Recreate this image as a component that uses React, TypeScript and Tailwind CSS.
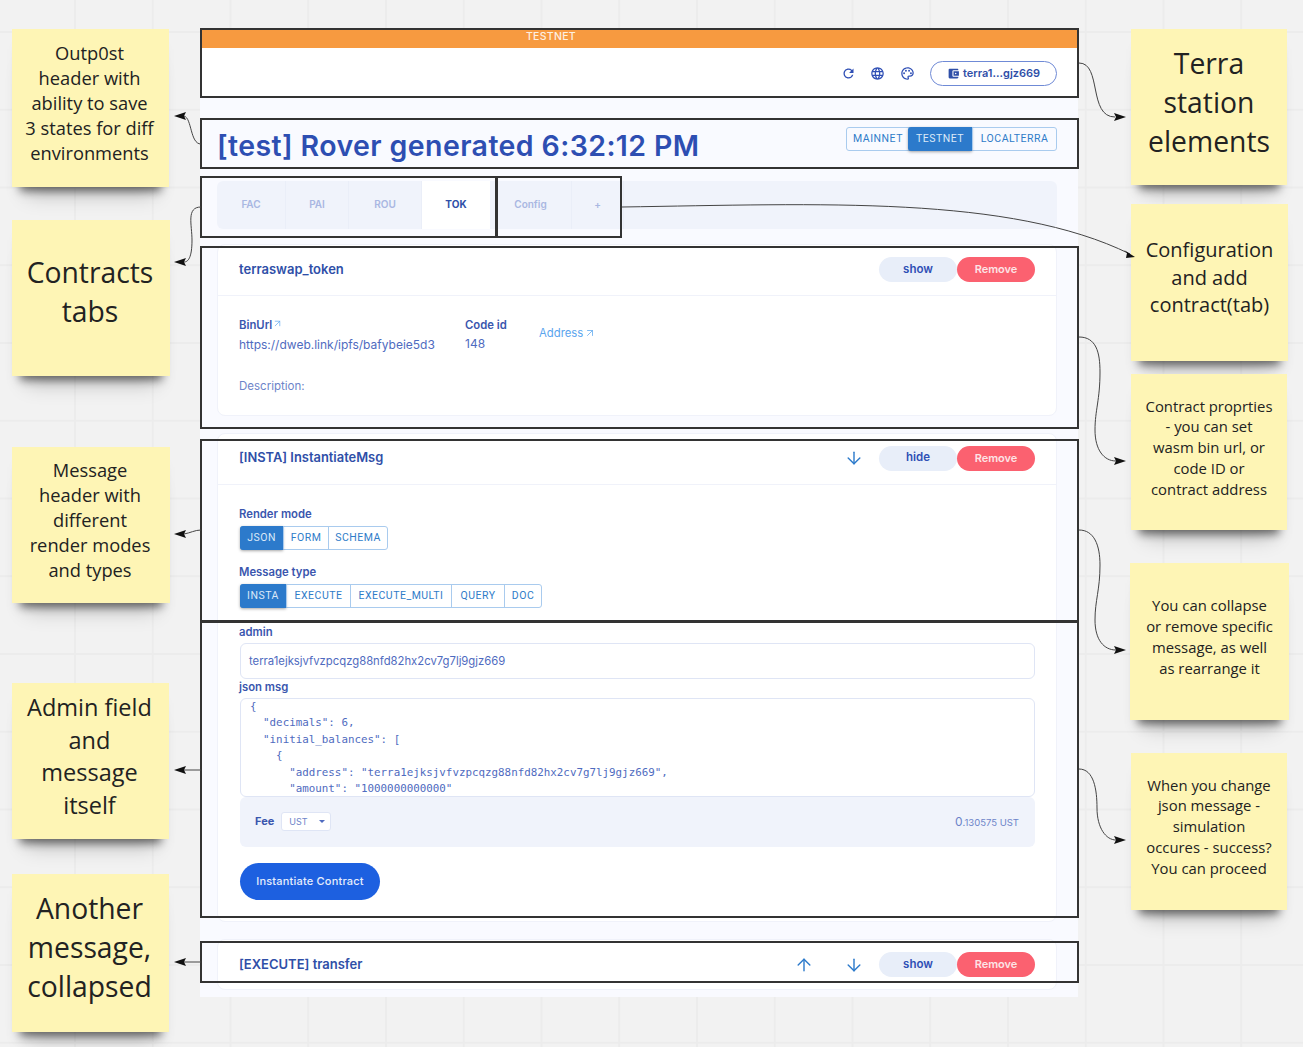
import { ArrowDown, ArrowUp, ArrowUpRight } from "lucide-react";
import {
  MdAccountBalanceWallet,
  MdLanguage,
  MdOutlinePalette,
  MdRefresh,
} from "react-icons/md";

interface StickyProps {
  left: number;
  top: number;
  width: number;
  height: number;
  className: string;
  lines: string[];
}

const stickies: StickyProps[] = [
  { left: 12, top: 29, width: 157, height: 158, className: "pb-[12px] pr-[2px] text-[18.3px] leading-[25px]", lines: ["Outp0st", "header with", "ability to save", "3 states for diff", "environments"] },
  { left: 12, top: 220, width: 158, height: 156, className: "pb-[12px] pr-[2px] text-[28.3px] leading-[39px]", lines: ["Contracts", "tabs"] },
  { left: 12, top: 447, width: 158, height: 156, className: "pb-[12px] pr-[2px] text-[18.3px] leading-[25px]", lines: ["Message", "header with", "different", "render modes", "and types"] },
  { left: 12, top: 683, width: 157, height: 156, className: "pb-[10px] pr-[2px] text-[23.5px] leading-[32.5px]", lines: ["Admin field", "and", "message", "itself"] },
  { left: 12, top: 874, width: 157, height: 158, className: "pb-[12px] pr-[2px] text-[28.3px] leading-[39px]", lines: ["Another", "message,", "collapsed"] },
  { left: 1131, top: 29, width: 156, height: 156, className: "pb-[10px] text-[28.3px] leading-[39px]", lines: ["Terra", "station", "elements"] },
  { left: 1131, top: 204, width: 157, height: 157, className: "pb-[10px] text-[20px] leading-[27.5px]", lines: ["Configuration", "and add", "contract(tab)"] },
  { left: 1131, top: 374, width: 156, height: 156, className: "pb-[9px] text-[14.85px] leading-[20.8px]", lines: ["Contract proprties", "- you can set", "wasm bin url, or", "code ID or", "contract address"] },
  { left: 1130, top: 563, width: 159, height: 157, className: "pb-[9px] text-[14.85px] leading-[20.8px]", lines: ["You can collapse", "or remove specific", "message, as well", "as rearrange it"] },
  { left: 1131, top: 753, width: 156, height: 157, className: "pb-[10px] text-[14.85px] leading-[20.8px]", lines: ["When you change", "json message -", "simulation", "occures - success?", "You can proceed"] },
];

// annotation boxes drawn over the app on the board
const frames = [
  { left: 200, top: 28, width: 879, height: 70 },
  { left: 200, top: 118, width: 879, height: 51 },
  { left: 200, top: 176, width: 297, height: 62 },
  { left: 496, top: 176, width: 126, height: 62 },
  { left: 200, top: 246, width: 879, height: 183 },
  { left: 200, top: 439, width: 879, height: 183 },
  { left: 200, top: 621, width: 879, height: 297 },
  { left: 200, top: 941, width: 879, height: 42 },
];

const curves = [
  "M201 144 C190 144 192 118 184 116",
  "M201 207 C186 207 192 225 192 240 C192 258 188 262 184 262",
  "M201 530 C195 530 190 533 184 534",
  "M201 770 L184 770",
  "M201 962 L184 962",
  "M1079 63 C1102 63 1088 117 1115 117",
  "M622 207 C820 204 1010 195 1130 254",
  "M1079 337 C1096 337 1100 352 1100 372 C1100 400 1095 410 1095 430 C1095 450 1104 461 1116 461",
  "M1079 530 C1094 530 1100 545 1100 565 C1100 590 1095 600 1095 620 C1095 640 1104 650 1116 650",
  "M1079 769 C1094 769 1097 790 1097 808 C1097 828 1106 840 1116 840",
];

const arrowHeads = [
  "M174 116 L186 112 L184 116 L186 120 Z",
  "M174 262 L186 258 L184 262 L186 266 Z",
  "M174 534 L186 530 L184 534 L186 538 Z",
  "M174 770 L186 766 L184 770 L186 774 Z",
  "M174 962 L186 958 L184 962 L186 966 Z",
  "M1126 117 L1114 113 L1116 117 L1114 121 Z",
  "M1135 257 L1124 250 L1127 253 L1126 258 Z",
  "M1126 461 L1114 457 L1116 461 L1114 465 Z",
  "M1126 650 L1114 646 L1116 650 L1114 654 Z",
  "M1126 840 L1114 836 L1116 840 L1114 844 Z",
];

function Sticky({ left, top, width, height, className, lines }: StickyProps) {
  return (
    <div
      className={`absolute flex items-center justify-center bg-[#fef5b5] text-center text-[#222222] shadow-[0_12px_9px_-8px_rgba(0,0,0,0.55),0_22px_20px_-14px_rgba(0,0,0,0.2)] [font-family:'Open_Sans',sans-serif] ${className}`}
      style={{ left, top, width, height }}
    >
      <div>
        {lines.map((line) => (
          <div key={line} className="whitespace-nowrap">
            {line}
          </div>
        ))}
      </div>
    </div>
  );
}

function Toggle({ items, active, widths }: { items: string[]; active: string; widths: number[] }) {
  return (
    <div className="flex h-[24px] w-fit rounded-[3px] border border-[#a9cbee] [font-family:Roboto,sans-serif]">
      {items.map((item, i) => (
        <div
          key={item}
          className={
            item === active
              ? "-my-px -ml-px flex items-center justify-center rounded-l-[3px] bg-[#2c7acb] text-[10.5px] tracking-[0.5px] text-[#dbe9f8] shadow-[0_1px_3px_rgba(0,0,0,0.35)]"
              : "flex items-center justify-center border-l border-[#a9cbee] text-[10.5px] tracking-[0.5px] text-[#2f7cc9] first:border-l-0"
          }
          style={{ width: widths[i] }}
        >
          {item}
        </div>
      ))}
    </div>
  );
}

function CardButtons({ label, up, down }: { label: string; up?: boolean; down?: boolean }) {
  return (
    <div className="flex items-center">
      {up && <ArrowUp size={20} strokeWidth={1.7} className="mr-[30px] text-[#2c7acb]" />}
      {down && <ArrowDown size={20} strokeWidth={1.7} className="mr-[15px] text-[#2c7acb]" />}
      <div className="flex h-[25px] w-[78px] items-center justify-center rounded-full bg-[#e8eef9] text-[11.5px] font-semibold text-[#2f4fb5]">
        {label}
      </div>
      <div className="flex h-[25px] w-[78px] items-center justify-center rounded-full bg-[#fb6170] text-[11px] font-semibold text-[#fde4e6]">
        Remove
      </div>
    </div>
  );
}

function Tab({ label, width, active }: { label: string; width: number; active?: boolean }) {
  return (
    <div
      className={
        active
          ? "flex items-center justify-center bg-white pb-[2px] text-[10px] font-bold text-[#2f4fa8]"
          : "flex items-center justify-center border-r border-[#eaeef8] pb-[2px] text-[10px] font-semibold text-[#a9b7e2]"
      }
      style={{ width }}
    >
      {label}
    </div>
  );
}

const jsonMsg = `{
  "decimals": 6,
  "initial_balances": [
    {
      "address": "terra1ejksjvfvzpcqzg88nfd82hx2cv7g7lj9gjz669",
      "amount": "1000000000000"`;

function AppPanel() {
  return (
    <div className="absolute left-[200px] top-[28px] h-[969px] w-[878px] bg-[#f9faff] [font-family:Inter,sans-serif]">
      <div className="flex h-[20px] justify-center bg-[#f79a40] pr-[176px] pt-[2px] text-[10.5px] font-medium leading-[14px] tracking-[0.3px] text-[#fdf0e2]">
        TESTNET
      </div>
      <div className="flex h-[49px] items-center justify-end bg-white pr-[21px] pt-[1px] text-[#2f4fb5]">
        <MdRefresh size={15} className="mr-[14px]" />
        <MdLanguage size={15} className="mr-[15px]" />
        <MdOutlinePalette size={15} className="mr-[15px]" />
        <div className="flex h-[25px] w-[127px] items-center justify-center gap-[3px] rounded-full border border-[#6f8ad6] text-[11px] font-semibold text-[#2f4fa8]">
          <MdAccountBalanceWallet size={13} />
          terra1...gjz669
        </div>
      </div>

      <div className="flex h-[84px] justify-between pl-[17px] pr-[21px]">
        <div className="pt-[30px] text-[28.5px] font-semibold leading-[38px] tracking-[0.4px] text-[#2d4eb2]">
          [test] Rover generated 6:32:12 PM
        </div>
        <div className="pt-[30px]">
          <Toggle items={["MAINNET", "TESTNET", "LOCALTERRA"]} active="TESTNET" widths={[62, 64, 84]} />
        </div>
      </div>

      <div className="mx-[17px] flex h-[48px] w-[840px] overflow-hidden rounded-[6px] bg-[#f0f3fb]">
        <Tab label="FAC" width={69} />
        <Tab label="PAI" width={63} />
        <Tab label="ROU" width={73} />
        <Tab label="TOK" width={68} active />
        <Tab label="Config" width={82} />
        <Tab label="+" width={52} />
      </div>

      <div className="mx-[17px] mt-[15px] h-[172px] w-[840px] rounded-[8px] border border-[#f0f2fa] bg-white">
        <div className="flex h-[51px] items-center justify-between border-b border-[#f0f2fa] pb-[1px] pl-[21px] pr-[21px]">
          <div className="text-[13px] font-semibold text-[#2f4fa8]">terraswap_token</div>
          <CardButtons label="show" />
        </div>
        <div className="flex pl-[21px] pt-[21px] text-[12px] text-[#4f6bc0]">
          <div className="w-[226px]">
            <div className="flex h-[16px] items-center text-[11.3px] font-semibold text-[#3a56ae]">
              BinUrl
              <ArrowUpRight size={11} strokeWidth={1.5} className="mb-[3px] text-[#5aa5ee]" />
            </div>
            <div className="mt-[4px] leading-[16px]">https://dweb.link/ipfs/bafybeie5d3</div>
          </div>
          <div className="w-[74px]">
            <div className="h-[16px] text-[11.3px] font-semibold leading-[16px] text-[#3a56ae]">Code id</div>
            <div className="mt-[3px] leading-[16px]">148</div>
          </div>
          <div className="flex h-[16px] items-center gap-[1px] self-start pt-[16px] text-[11.3px] text-[#5aa5ee]">
            Address
            <ArrowUpRight size={12} strokeWidth={1.5} />
          </div>
        </div>
        <div className="pl-[21px] pt-[25px] text-[11.5px] leading-[16px] text-[#6d84c9]">Description:</div>
      </div>

      <div className="mx-[17px] mt-[17px] h-[489px] w-[840px] rounded-[8px] border border-[#f0f2fa] bg-white">
        <div className="flex h-[51px] items-center justify-between border-b border-[#f0f2fa] pb-[2px] pl-[21px] pr-[21px]">
          <div className="text-[12.9px] font-semibold text-[#2f4fa8]">[INSTA] InstantiateMsg</div>
          <CardButtons label="hide" down />
        </div>
        <div className="pl-[22px] pr-[21px]">
          <div className="-ml-px pt-[21px] text-[11.3px] font-semibold leading-[16px] text-[#3a56ae]">Render mode</div>
          <div className="mt-[4px]">
            <Toggle items={["JSON", "FORM", "SCHEMA"]} active="JSON" widths={[43, 45, 59]} />
          </div>
          <div className="-ml-px pt-[14px] text-[11.3px] font-semibold leading-[16px] text-[#3a56ae]">Message type</div>
          <div className="mt-[4px]">
            <Toggle items={["INSTA", "EXECUTE", "EXECUTE_MULTI", "QUERY", "DOC"]} active="INSTA" widths={[46, 64, 101, 53, 37]} />
          </div>
          <div className="-ml-px pt-[16px] text-[11.3px] font-semibold leading-[16px] text-[#3a56ae]">admin</div>
          <div className="mt-[3px] flex h-[36px] items-center rounded-[6px] border border-[#dfe5f5] pl-[8px] text-[11.3px] text-[#4f6bc0]">
            terra1ejksjvfvzpcqzg88nfd82hx2cv7g7lj9gjz669
          </div>
          <div className="-ml-px text-[11.3px] font-semibold leading-[16px] text-[#3a56ae]">json msg</div>
          <div className="mt-[3px] h-[99px] overflow-hidden rounded-[6px] border border-[#dfe5f5] pl-[9px]">
            <pre className="text-[10.85px] leading-[16.4px] text-[#4f6bc0] [font-family:'DejaVu_Sans_Mono',monospace]">
              {jsonMsg}
            </pre>
          </div>
          <div className="flex h-[50px] items-center justify-between rounded-[6px] bg-[#f0f3fb] pb-[1px] pl-[15px] pr-[16px]">
            <div className="flex items-center gap-[7px]">
              <div className="text-[11px] font-bold text-[#3a56ae]">Fee</div>
              <div className="flex h-[19px] w-[50px] items-center justify-between rounded-[3px] border border-[#dfe5f5] bg-white pl-[7px] pr-[5px] text-[9px] text-[#6d84c9]">
                UST
                <span className="h-0 w-0 border-x-[3px] border-t-[3px] border-x-transparent border-t-[#4f6bc0]" />
              </div>
            </div>
            <div className="text-[9.5px] text-[#6d84c9]">
              <span className="text-[12px]">0</span>.130575 UST
            </div>
          </div>
          <div className="mt-[16px] flex h-[37px] w-[140px] items-center justify-center rounded-full bg-[#1d60e0] text-[11px] font-medium tracking-[0.2px] text-[#e6edfc]">
            Instantiate Contract
          </div>
        </div>
      </div>

      <div className="mx-[17px] mt-[17px] flex h-[51px] w-[840px] items-center justify-between rounded-[8px] border border-[#f0f2fa] bg-white pl-[21px] pr-[21px]">
        <div className="text-[13px] font-semibold text-[#2f4fa8]">[EXECUTE] transfer</div>
        <CardButtons label="show" up down />
      </div>
    </div>
  );
}

export default function App() {
  return (
    <div className="relative h-[1047px] w-[1303px] overflow-hidden bg-[#f2f2f2] bg-[linear-gradient(to_right,#ececec_2px,transparent_2px),linear-gradient(to_bottom,#ececec_2px,transparent_2px)] bg-[size:77.75px_77.75px] bg-[position:74px_31px]">
      <AppPanel />
      {stickies.map((s) => (
        <Sticky key={s.lines[0]} {...s} />
      ))}
      {frames.map((f) => (
        <div
          key={`${f.left}-${f.top}`}
          className="pointer-events-none absolute border-2 border-[#333333]"
          style={{ left: f.left, top: f.top, width: f.width, height: f.height }}
        />
      ))}
      <svg className="pointer-events-none absolute left-0 top-0" width={1303} height={1047} fill="none">
        {curves.map((d) => (
          <path key={d} d={d} stroke="#444444" strokeWidth={1} />
        ))}
        {arrowHeads.map((d) => (
          <path key={d} d={d} fill="#111111" />
        ))}
      </svg>
    </div>
  );
}
